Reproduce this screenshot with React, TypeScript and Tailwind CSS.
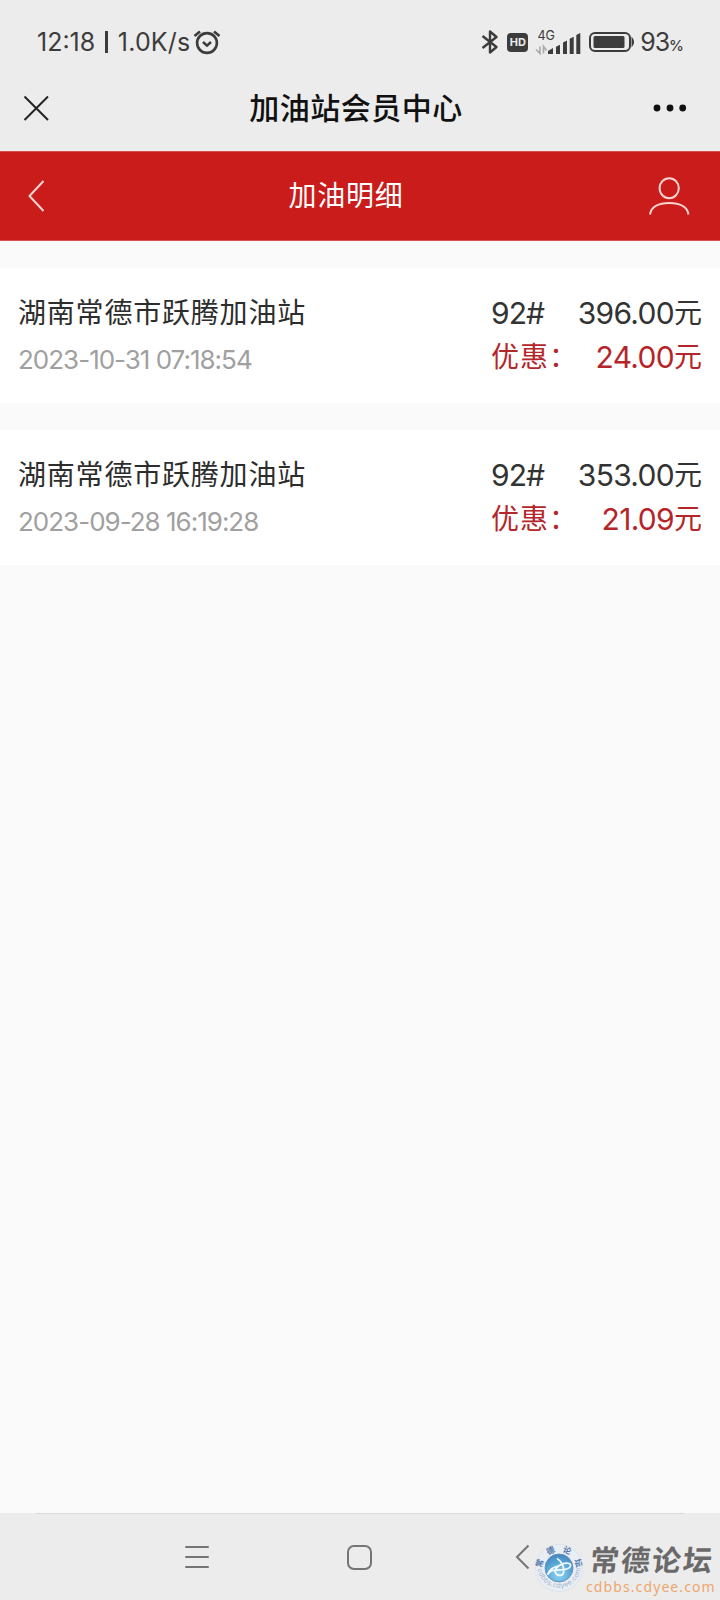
import React from 'react';

type RecordItem = {
  station: string;
  time: string;
  oil: string;
  amount: string;
  discount: string;
};

const records: RecordItem[] = [
  { station: '湖南常德市跃腾加油站', time: '2023-10-31 07:18:54', oil: '92#', amount: '396.00', discount: '24.00' },
  { station: '湖南常德市跃腾加油站', time: '2023-09-28 16:19:28', oil: '92#', amount: '353.00', discount: '21.09' },
];

const StatusBar: React.FC = () => (
  <div className="flex h-[84px] items-center pr-[36px] pl-[37px] text-[#3c3c3c]">
    <div className="flex items-center text-[25px] leading-none">
      <span>12:18</span>
      <span className="mx-[10px] h-[22px] w-[2.5px] bg-current" />
      <span className="tracking-[0.2px]">1.0K/s</span>
    </div>
    <svg className="ml-[3px] h-[26px] w-[28px]" viewBox="0 0 28 26" fill="none" stroke="currentColor" strokeWidth="2.6">
      <circle cx="14" cy="14" r="9.9" />
      <path d="M10 13l4 3.6 4-3.6" />
      <path d="M1.5 7L7 2.4M26.5 7L21 2.4" />
    </svg>
    <div className="ml-auto flex items-center">
      <svg className="h-[26px] w-[18px]" viewBox="0 0 18 26" fill="none" stroke="currentColor" strokeWidth="2.4" strokeLinejoin="round">
        <path d="M1.5 7l14 11L9 23.5v-21L15.5 8l-14 11" />
      </svg>
      <span className="ml-2 flex h-[19px] w-[21px] items-center justify-center rounded-[4px] bg-[#3c3c3c] text-[11px] leading-none font-bold text-[#ececec]">
        HD
      </span>
      <svg className="ml-2 h-[26px] w-[46px] overflow-visible" viewBox="0 0 46 26" fill="currentColor">
        <text x="1.5" y="11" fontSize="13" textLength="17.5" lengthAdjust="spacingAndGlyphs">4G</text>
        <path d="M12 22l5-3v6h-5zM20 17.7l4-2V25h-4zM27 13.6l4-2V25h-4zM33.7 9.8l4-2V25h-4zM40.3 6l4-2v21h-4z" />
        <path d="M4 17.500v7l-4-4M7.500 24.500v-7l3 4" fill="none" stroke="#aaa" strokeWidth="1.6" />
      </svg>
      <svg className="ml-[7px] h-[20px] w-[46px]" viewBox="0 0 46 20" fill="none">
        <rect x="1" y="1" width="40" height="18" rx="5" stroke="currentColor" strokeWidth="2" />
        <rect x="4.5" y="4" width="31" height="12" rx="1.5" fill="currentColor" />
        <path d="M43.3 7q2 3 0 6z" fill="currentColor" stroke="currentColor" strokeWidth="1.5" />
      </svg>
      <span className="ml-[5px] flex items-baseline leading-none">
        <span className="text-[25px] tracking-[-1.1px]">93</span>
        <span className="text-[15px] font-medium">%</span>
      </span>
    </div>
  </div>
);

const TitleBar: React.FC = () => (
  <div className="flex h-[67px] items-center justify-between pr-[33px] pb-[20px] pl-[23px]">
    <svg className="h-[26px] w-[26px]" viewBox="0 0 26 26" fill="none" stroke="#222" strokeWidth="2">
      <path d="M1.5 1.5l23.5 23.5M25 1.5L1.5 25" />
    </svg>
    <h1 className="ml-[10px] text-[30px] leading-none font-medium tracking-[0.5px] text-[#111]">加油站会员中心</h1>
    <svg className="h-[8px] w-[34px]" viewBox="0 0 34 8" fill="#111">
      <circle cx="4" cy="4" r="3.4" />
      <circle cx="17" cy="4" r="3.4" />
      <circle cx="29.7" cy="4" r="3.4" />
    </svg>
  </div>
);

const PageHeader: React.FC = () => (
  <header className="flex h-[90px] items-center justify-between border-y border-[#d6504f] bg-[#c91c1b] pr-[30px] pl-[28px] text-white">
    <svg className="h-[32px] w-[17px]" viewBox="0 0 17 32" fill="none" stroke="#fbd5cf" strokeWidth="2">
      <path d="M15.5 1L1.5 16l14 15" />
    </svg>
    <h2 className="mr-[2px] text-[28px] leading-none tracking-[0.8px]">加油明细</h2>
    <svg className="h-[38px] w-[41px]" viewBox="0 0 41 38" fill="none" stroke="#fbd5cf" strokeWidth="2">
      <ellipse cx="20.2" cy="11.2" rx="9.6" ry="10" />
      <path d="M1 37.5C2 30 9.5 26 20.2 26S38.5 30 39.5 37.5" />
    </svg>
  </header>
);

const RecordCard: React.FC<{ item: RecordItem }> = ({ item }) => (
  <li className="flex h-[135px] justify-between bg-white pt-[28px] pr-[18px] pl-[18px]">
    <div>
      <p className="text-[28px] leading-[35px] tracking-[0.8px] text-[#2d2d2d]">{item.station}</p>
      <p className="mt-[12px] text-[26px] leading-[34px] tracking-[-1px] text-[#a0a0a0]">{item.time}</p>
    </div>
    <div className="w-[211px] text-[28px]">
      <div className="flex h-[34px] items-center justify-between text-[#333]">
        <span className="text-[30px] tracking-[-0.9px]">{item.oil}</span>
        <span className="flex items-center leading-none">
          <span className="text-[30px] tracking-[-0.7px]">{item.amount}</span>元
        </span>
      </div>
      <div className="mt-[10px] flex h-[34px] items-center justify-between text-[#b5262a]">
        <span className="leading-none tracking-[1px]">优惠：</span>
        <span className="flex items-center leading-none">
          <span className="text-[30px] tracking-[-0.7px]">{item.discount}</span>元
        </span>
      </div>
    </div>
  </li>
);

const Watermark: React.FC = () => (
  <div className="absolute right-[4px] bottom-[5px] flex items-start">
    <svg className="h-[50px] w-[50px]" viewBox="0 0 52 52">
      <defs>
        <radialGradient id="ball" cx="50%" cy="75%" r="75%">
          <stop offset="0" stopColor="#8fd4f2" />
          <stop offset="0.6" stopColor="#58a6d6" />
          <stop offset="1" stopColor="#4484bd" />
        </radialGradient>
        <path id="arcTop" d="M8 27a18 18 0 0 1 36 0" />
        <path id="arcBottom" d="M3.5 24a22.500 22.500 0 0 0 45 0" />
      </defs>
      <circle cx="26" cy="26" r="24.5" fill="#e9eef4" stroke="#dbe3ea" />
      <circle cx="26" cy="26" r="14.5" fill="url(#ball)" stroke="#5c90bd" />
      <path
        d="M24 16c4 3 7 8 7 13 0 5-5 6-8 3s1-8 6-10 10-1 9 2-7 4-12 4-9 0-12 5c2-5 6-8 11-9"
        fill="none"
        stroke="#f2f9fd"
        strokeWidth="1.8"
      />
      <text fontSize="8.5" fontWeight="700" fill="#5277ac">
        <textPath href="#arcTop" startOffset="1" textLength="54">常德论坛</textPath>
      </text>
      <text fontSize="7" fill="#a3b4cb">
        <textPath href="#arcBottom" startOffset="3" textLength="65">cdbbs.cdyee.com</textPath>
      </text>
    </svg>
    <div className="ml-[2px] w-[130px]">
      <p className="-skew-x-6 pl-[4px] text-[29px] leading-[36px] font-bold tracking-[2px] whitespace-nowrap text-[#6a6a6a]">
        常德论坛
      </p>
      <p className="font-['Noto_Sans',sans-serif] text-[14px] leading-[16px] tracking-[1.1px] text-[#eca76c]">cdbbs.cdyee.com</p>
    </div>
  </div>
);

const NavBar: React.FC = () => (
  <nav className="relative h-[87px] bg-[#ececec] px-[36px]">
    <div className="h-px bg-[#d9d9d9]" />
    <div className="flex h-[86px] items-center pl-[148px] text-[#757575]">
      <svg className="h-[26px] w-[26px]" viewBox="0 0 26 26" fill="none" stroke="currentColor" strokeWidth="2" strokeLinecap="round">
        <path d="M2 3h22M2 13h22M2 23h22" />
      </svg>
      <span className="ml-[137px] h-[25px] w-[25px] rounded-[7px] border-2 border-current" />
      <svg className="ml-[143px] h-[26px] w-[15px]" viewBox="0 0 15 26" fill="none" stroke="currentColor" strokeWidth="2">
        <path d="M13.5 1.5L2 13l11.5 11.5" />
      </svg>
    </div>
    <Watermark />
  </nav>
);

const App: React.FC = () => {
  return (
    <div className="flex h-[1600px] w-[720px] flex-col overflow-hidden bg-[#fafafa] font-['Inter','Noto_Sans_CJK_SC',sans-serif]">
      <div className="bg-[#ececec]">
        <StatusBar />
        <TitleBar />
      </div>
      <PageHeader />
      <ul className="mt-[27px] flex flex-1 flex-col gap-[27px]">
        {records.map((item) => (
          <RecordCard key={item.time} item={item} />
        ))}
      </ul>
      <NavBar />
    </div>
  );
};

export default App;
